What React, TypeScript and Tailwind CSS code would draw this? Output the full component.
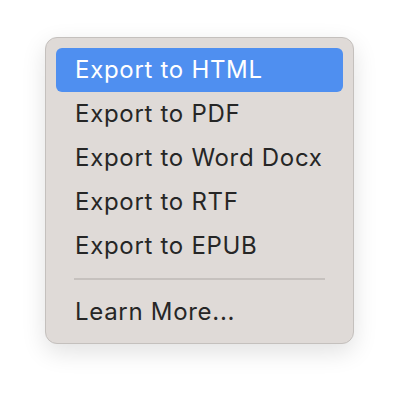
export default function App() {
  const items = ["Export to PDF", "Export to Word Docx", "Export to RTF", "Export to EPUB"];
  return (
    <div className="w-[400px] h-[398px] bg-white pt-[37px] pl-[45px]" style={{ fontFamily: "Inter, 'Noto Sans', sans-serif" }}>
      <div className="w-[309px] h-[307px] rounded-[12px] border border-[#c4c0bd] bg-[#dfdad7] p-[10px] shadow-[0_8px_24px_rgba(0,0,0,0.12)]">
        <div className="h-[44px] rounded-[6px] bg-[#4f8ff0] pl-[19px] flex items-center text-white text-[24px] tracking-[0.7px]">
          Export to HTML
        </div>
        {items.map((t) => (
          <div key={t} className="h-[44px] pl-[19px] flex items-center text-[#262626] text-[24px] tracking-[0.7px]">
            {t}
          </div>
        ))}
        <div className="h-[22px] flex items-center px-[18px]">
          <div className="h-[2px] w-full bg-[#c6c1be]" />
        </div>
        <div className="h-[44px] pl-[19px] flex items-center text-[#262626] text-[24px] tracking-[0.7px]">
          Learn More...
        </div>
      </div>
    </div>
  );
}
